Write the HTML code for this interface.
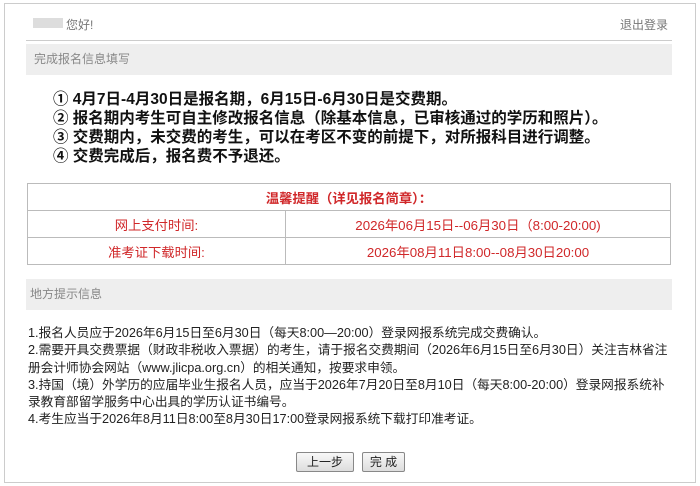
<!DOCTYPE html>
<html><head><meta charset="utf-8"><style>
body{margin:0;width:700px;height:486px;background:#fff;font-family:"Liberation Sans","Noto Sans CJK SC",sans-serif;position:relative;overflow:hidden}
.frame{position:absolute;left:4px;top:3px;width:690px;height:478px;border:1px solid #ccc}
.abs{position:absolute}
.bar{position:absolute;left:26px;width:646px;background:#eee;color:#888;font-size:12px;box-sizing:border-box;padding-left:8px}
.list{position:absolute;left:53px;top:90px;font-size:15.5px;font-weight:bold;line-height:19px;color:#111;white-space:nowrap}
table{position:absolute;left:27px;top:183px;width:644px;border-collapse:collapse;font-size:13.3px;color:#d0282a}
td{border:1px solid #bbb;height:25px;text-align:center;padding:0}
.p{position:absolute;left:28px;top:325px;font-size:12.7px;line-height:17.3px;color:#222;width:646px}
.btn{position:absolute;top:452px;height:18px;border:1px solid #888;background:linear-gradient(#f8f8f8,#ddd);font-size:12px;text-align:center;line-height:18px;color:#222;border-radius:2px}
</style></head><body>
<div class="frame"></div>
<div class="abs" style="left:33px;top:18px;width:30px;height:10px;background:#ddd"></div>
<div class="abs" style="left:66px;top:16px;font-size:12px;color:#777">您好!</div>
<div class="abs" style="left:620px;top:16px;font-size:12px;color:#777">退出登录</div>
<div class="abs" style="left:26px;top:40px;width:646px;height:1px;background:#ccc"></div>
<div class="bar" style="top:44px;height:31px;line-height:31px">完成报名信息填写</div>
<div class="list">① 4月7日-4月30日是报名期，6月15日-6月30日是交费期。<br>② 报名期内考生可自主修改报名信息（除基本信息，已审核通过的学历和照片）。<br>③ 交费期内，未交费的考生，可以在考区不变的前提下，对所报科目进行调整。<br>④ 交费完成后，报名费不予退还。</div>
<table>
<tr><td colspan="2" style="font-weight:bold;height:26px">温馨提醒（详见报名简章）：</td></tr>
<tr><td style="width:257px;height:26px">网上支付时间:</td><td>2026年06月15日--06月30日（8:00-20:00)</td></tr>
<tr><td style="height:26px">准考证下载时间:</td><td>2026年08月11日8:00--08月30日20:00</td></tr>
</table>
<div class="bar" style="top:279px;height:31px;line-height:31px;padding-left:4px">地方提示信息</div>
<div class="p">1.报名人员应于2026年6月15日至6月30日（每天8:00—20:00）登录网报系统完成交费确认。<br>2.需要开具交费票据（财政非税收入票据）的考生，请于报名交费期间（2026年6月15日至6月30日）关注吉林省注<br>册会计师协会网站（www.jlicpa.org.cn）的相关通知，按要求申领。<br>3.持国（境）外学历的应届毕业生报名人员，应当于2026年7月20日至8月10日（每天8:00-20:00）登录网报系统补<br>录教育部留学服务中心出具的学历认证书编号。<br>4.考生应当于2026年8月11日8:00至8月30日17:00登录网报系统下载打印准考证。</div>
<div class="btn" style="left:296px;width:56px">上一步</div>
<div class="btn" style="left:362px;width:41px">完 成</div>
</body></html>
